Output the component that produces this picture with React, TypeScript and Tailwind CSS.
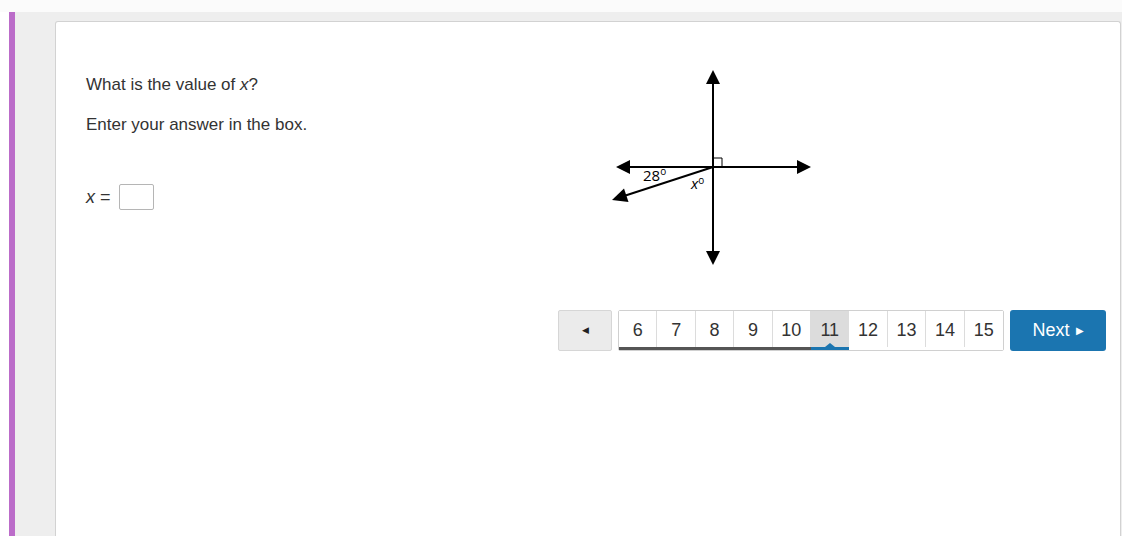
import React from 'react';

const pages = [6, 7, 8, 9, 10, 11, 12, 13, 14, 15];
const current = 11;

function Diagram() {
    return (
        <svg width="210" height="205" viewBox="0 0 210 205" className="block">
            {/* vertical line */}
            <line x1="107" y1="16" x2="107" y2="189" stroke="#000" strokeWidth="2" />
            <polygon points="107,5 100,19 114,19" fill="#000" />
            <polygon points="107,200 100,186 114,186" fill="#000" />
            {/* horizontal line */}
            <line x1="22" y1="102" x2="193" y2="102" stroke="#000" strokeWidth="2" />
            <polygon points="10,102 24,95 24,109" fill="#000" />
            <polygon points="205,102 191,95 191,109" fill="#000" />
            {/* ray */}
            <line x1="107" y1="102" x2="18" y2="131" stroke="#000" strokeWidth="2" />
            <polygon points="6,135 18,123.5 22.5,137" fill="#000" />
            {/* right angle mark */}
            <polyline points="107,93 116,93 116,102" fill="none" stroke="#000" strokeWidth="1" />
            <text x="37" y="116" fontSize="15" fontFamily="'Open Sans', 'DejaVu Sans', sans-serif" fill="#000">
                28
                <tspan fontSize="10" dy="-6">o</tspan>
            </text>
            <text x="85" y="124" fontSize="15" fontStyle="italic" fontFamily="'Open Sans', 'DejaVu Sans', sans-serif" fill="#000">
                x
                <tspan fontSize="10" dy="-5" fontStyle="normal">o</tspan>
            </text>
        </svg>
    );
}

export default function App() {
    return (
        <div className="h-[542px] w-[1122px] bg-white overflow-hidden font-['Liberation_Sans',Arial,sans-serif] text-[#333]">
            <div className="h-[12px] bg-[#fbfbfb]" />
            <div className="flex h-[524px]">
                <div className="w-[9px] bg-white" />
                <div className="w-[6px] bg-[#bb6cc9]" />
                <div className="flex-1 bg-[#eeeeee] pl-[40px] pt-[9px] pr-[1px]">
                    <div className="h-full bg-white border border-b-0 border-[#d2d2d2] rounded-t-[3px] pt-[43px]">
                        <div className="flex items-start">
                            <div className="w-[550px] pl-[30px] pt-[9px] text-[17px] leading-[22px]">
                                <p>
                                    What is the value of <i>x</i>?
                                </p>
                                <p className="mt-[18px]">Enter your answer in the box.</p>
                                <div className="mt-[48px] flex items-center gap-[8px] text-[18px]">
                                    <span>
                                        <i>x</i> =
                                    </span>
                                    <div className="w-[35px] h-[26px] border border-[#b5b5b5] rounded-[2px] bg-white" />
                                </div>
                            </div>
                            <Diagram />
                        </div>

                        <div className="mt-[40px] flex justify-end pr-[14px] gap-[6px]">
                            <button className="w-[54px] h-[41px] bg-[#ebebeb] border border-[#d6d6d6] rounded-[2px] flex items-center justify-center">
                                <span className="text-[#222] text-[9px]">◀</span>
                            </button>
                            <div className="flex h-[41px] border border-[#d0d0d0] rounded-[2px]">
                                {pages.map((p, i) => {
                                    const before = p < current;
                                    const active = p === current;
                                    return (
                                        <div
                                            key={p}
                                            className={
                                                'relative w-[38.4px] flex flex-col ' +
                                                (active ? 'bg-[#dcdcdc]' : 'bg-white')
                                            }
                                        >
                                            <div
                                                className={
                                                    'flex-1 flex items-center justify-center text-[18px] text-[#333] pt-[2px] ' +
                                                    (i < pages.length - 1 ? 'border-r border-[#dcdcdc]' : '')
                                                }
                                            >
                                                {p}
                                            </div>
                                            <div
                                                className={
                                                    'h-[3px] ' +
                                                    (active ? 'bg-[#1b75b0]' : before ? 'bg-[#555]' : 'bg-transparent')
                                                }
                                            />
                                            {active && (
                                                <div className="absolute bottom-[3px] left-1/2 -translate-x-1/2 w-0 h-0 border-l-[5px] border-r-[5px] border-b-[4px] border-l-transparent border-r-transparent border-b-[#1b75b0]" />
                                            )}
                                        </div>
                                    );
                                })}
                            </div>
                            <button className="w-[96px] h-[41px] bg-[#1b75b0] rounded-[3px] text-white text-[18px] flex items-center justify-center gap-[6px]">
                                Next
                                <span className="text-[10px]">▶</span>
                            </button>
                        </div>
                    </div>
                </div>
            </div>
        </div>
    );
}
